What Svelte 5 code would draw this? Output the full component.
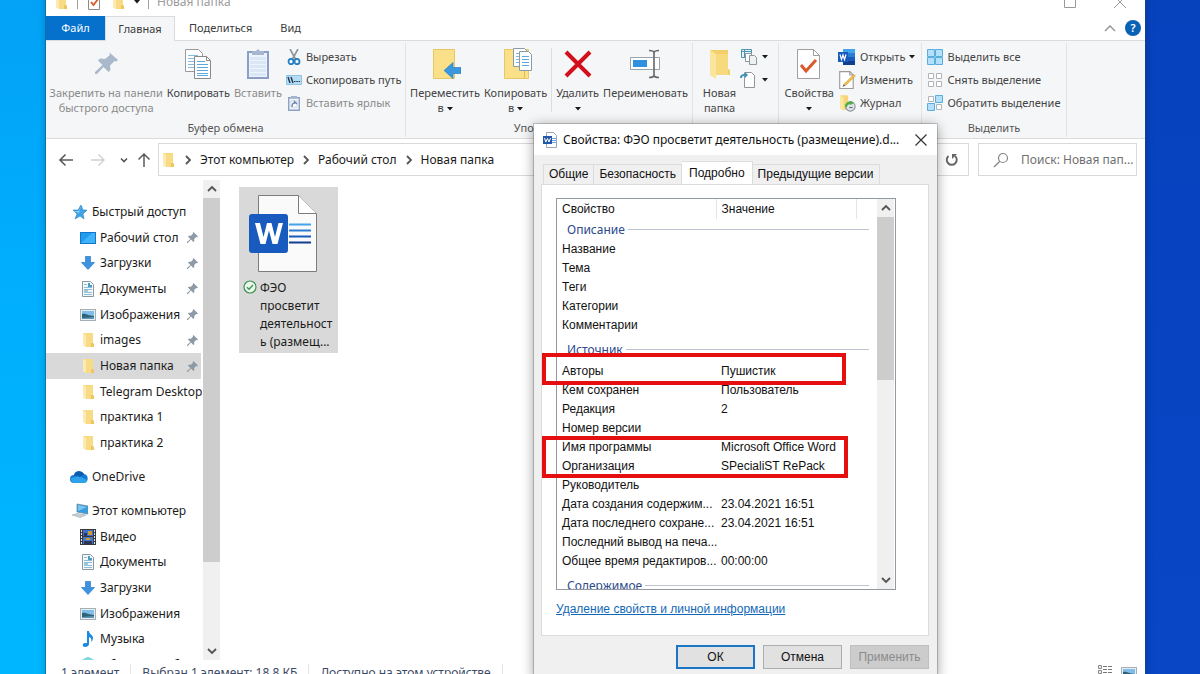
<script lang="ts">
  type NavItem = { icon: string; label: string; pinned?: boolean; root?: boolean };

  const quickAccess: NavItem[] = [
    { icon: 'star', label: 'Быстрый доступ', root: true },
    { icon: 'desktop', label: 'Рабочий стол', pinned: true },
    { icon: 'download', label: 'Загрузки', pinned: true },
    { icon: 'document', label: 'Документы', pinned: true },
    { icon: 'picture', label: 'Изображения', pinned: true },
    { icon: 'folder', label: 'images', pinned: true },
    { icon: 'folder', label: 'Новая папка', pinned: true },
    { icon: 'folder', label: 'Telegram Desktop' },
    { icon: 'folder', label: 'практика 1' },
    { icon: 'folder', label: 'практика 2' },
  ];

  const oneDrive: NavItem[] = [{ icon: 'cloud', label: 'OneDrive', root: true }];

  const computer: NavItem[] = [
    { icon: 'computer', label: 'Этот компьютер', root: true },
    { icon: 'video', label: 'Видео' },
    { icon: 'document', label: 'Документы' },
    { icon: 'download', label: 'Загрузки' },
    { icon: 'picture', label: 'Изображения' },
    { icon: 'music', label: 'Музыка' },
    { icon: 'objects', label: 'Объемные объекты' },
  ];

  const path = ['Этот компьютер', 'Рабочий стол', 'Новая папка'];

  const groups = [
    {
      title: 'Описание',
      rows: [
        ['Название', ''],
        ['Тема', ''],
        ['Теги', ''],
        ['Категории', ''],
        ['Комментарии', ''],
      ],
    },
    {
      title: 'Источник',
      rows: [
        ['Авторы', 'Пушистик'],
        ['Кем сохранен', 'Пользователь'],
        ['Редакция', '2'],
        ['Номер версии', ''],
        ['Имя программы', 'Microsoft Office Word'],
        ['Организация', 'SPecialiST RePack'],
        ['Руководитель', ''],
        ['Дата создания содержим...', '23.04.2021 16:51'],
        ['Дата последнего сохране...', '23.04.2021 16:51'],
        ['Последний вывод на печа...', ''],
        ['Общее время редактиров...', '00:00:00'],
      ],
    },
    { title: 'Содержимое', rows: [] },
  ];

  const dialogTabs = ['Общие', 'Безопасность', 'Подробно', 'Предыдущие версии'];

  let selected = $state('Новая папка');
  let activeTab = $state('Подробно');
</script>

{#snippet icon(name: string)}
  {#if name === 'folder'}
    <svg class="i16" viewBox="0 0 16 16" aria-hidden="true">
      <path d="M3 1h10v11l1 3H6l-3-2z" fill="#f8dc85" />
      <path d="M3 1l3 2v12l-3-2z" fill="#fceab2" />
      <path d="M11 11h2l1 1v3h-3z" fill="#f0c65c" />
    </svg>
  {:else if name === 'star'}
    <svg class="i16" viewBox="0 0 16 16" aria-hidden="true">
      <path d="M9 1l2 5 4 0-4 4 1 5-4-3-5 3 2-5-4-4 5 0z" fill="#3fa3e6" stroke="#2583c6" stroke-width=".6" />
      <path d="M9 2l-2 5-5 0 5 2z" fill="#8fd0f5" />
    </svg>
  {:else if name === 'desktop'}
    <svg class="i16" viewBox="0 0 16 16" aria-hidden="true">
      <rect x=".5" y="2.5" width="15" height="11" fill="#1f9bf0" stroke="#1277c8" />
      <path d="M1 13L12 3h3v10z" fill="#3fb2f8" />
    </svg>
  {:else if name === 'download'}
    <svg class="i16" viewBox="0 0 16 16" aria-hidden="true">
      <path d="M5.500 1.500h5v6h4L8 14.500l-6.500-7h4z" fill="#3d93e0" stroke="#2a78c4" stroke-width=".7" />
    </svg>
  {:else if name === 'document'}
    <svg class="i16" viewBox="0 0 16 16" aria-hidden="true">
      <path d="M2.500.5h8l3 3v12h-11z" fill="#f3f7fa" stroke="#8d979e" />
      <path d="M4 3.500h3M4 6.500h8M4 8.500h8M4 11.500h8M4 13.500h8" stroke="#8fbdd6" />
      <path d="M8 2h2v2h2v2H8z" fill="#4b9cc4" />
      <path d="M4 9h4v3H4z" fill="#9cc6dc" />
    </svg>
  {:else if name === 'picture'}
    <svg class="i16" viewBox="0 0 16 16" aria-hidden="true">
      <rect x=".5" y="2.500" width="15" height="11" fill="#e9eef2" stroke="#a5afb6" />
      <path d="M2 4h12v5H2z" fill="#80bdea" />
      <path d="M2 7c4-1 6 2 12 2v3H2z" fill="#2f6179" />
      <path d="M2 11l12-1v2H2z" fill="#5d96b6" />
    </svg>
  {:else if name === 'cloud'}
    <svg class="i18" viewBox="0 0 18 18" aria-hidden="true">
      <path d="M4 15a4 4 0 0 1 0-8 5.500 5.500 0 0 1 10-1 4.600 4.600 0 0 1 0 9z" fill="#1479d0" />
      <path d="M4 15a4 4 0 0 1-3-5l8-2 8 4c0 2-2 3-3 3z" fill="#2ea3ea" />
      <path d="M4 7a5.500 5.500 0 0 1 10-1l-4 3z" fill="#0c5cb0" />
    </svg>
  {:else if name === 'computer'}
    <svg class="i16" viewBox="0 0 16 16" aria-hidden="true">
      <path d="M5 1l11 2v8L5 9z" fill="#369de2" stroke="#6a8797" stroke-width=".7" />
      <path d="M6 2l9 2-9 4z" fill="#78c6f4" />
      <path d="M0 12l5-1.500 9 1.500-6 2.500z" fill="#c6d0d6" stroke="#93a0a8" stroke-width=".5" />
    </svg>
  {:else if name === 'video'}
    <svg class="i16" viewBox="0 0 16 16" aria-hidden="true">
      <path d="M0 0h16v16H0z" fill="#37393d" />
      <path d="M3 1h10v6H3z" fill="#3d6fd0" />
      <path d="M3 8h10v7H3z" fill="#4676c9" />
      <path d="M8 2h4v4H8zM6 9h4v2H6z" fill="#c99a36" />
      <path d="M4 4h3v3H4zM4 12h8v3H4z" fill="#29355c" />
      <path d="M1.500 1v15M14.500 1v15" stroke="#e4e4e4" stroke-dasharray="2 1" />
    </svg>
  {:else if name === 'music'}
    <svg class="i16" viewBox="0 0 16 16" aria-hidden="true">
      <path d="M7 0h2c0 3 4 4 4 7 0 2-1 3-2 4 1-3 0-4-2-5v7c0 2-2 3-4 3-3 0-3-4 0-4h2z" fill="#1c8ae0" />
    </svg>
  {:else if name === 'objects'}
    <svg class="i16" viewBox="0 0 16 16" aria-hidden="true">
      <path d="M8 0l8 4v8l-8 4-8-4V4z" fill="#3cb4cc" />
      <path d="M8 0l8 4-8 4-8-4z" fill="#7fd8e6" />
    </svg>
  {:else if name === 'scissors'}
    <svg class="i16" viewBox="0 0 16 16" aria-hidden="true">
      <path d="M4 0l5.500 10M12 0L6.500 10" fill="none" stroke="#8a939b" stroke-width="1.600" />
      <ellipse cx="5" cy="12.500" rx="2.500" ry="2.700" fill="none" stroke="#1c7cc4" stroke-width="1.700" />
      <ellipse cx="11" cy="12.500" rx="2.500" ry="2.700" fill="none" stroke="#1c7cc4" stroke-width="1.700" />
    </svg>
  {:else if name === 'copypath'}
    <svg class="i16" viewBox="0 0 16 16" aria-hidden="true">
      <path d="M.5 3.500h15v9H.5z" fill="#b5dcf4" stroke="#8fc4e4" />
      <path d="M2 5l2 6M5 5l2 6" stroke="#203850" stroke-width="1.400" />
      <path d="M8 9.500h6" stroke="#203850" stroke-dasharray="1.500 .8" />
    </svg>
  {:else if name === 'shortcut'}
    <svg class="i16" viewBox="0 0 16 16" aria-hidden="true">
      <path d="M2.700 2.700h10.600v12.600H2.700z" fill="#eef3fa" stroke="#8da2c2" stroke-width="1.400" />
      <path d="M5 1h6v2.500H5z" fill="#a3b4ce" />
      <path d="M5 6h6v6H5z" fill="#fff" stroke="#b6c4da" stroke-width=".6" />
      <path d="M6 12c0-3 1-4 2.500-4V6.500L11 9" fill="none" stroke="#6c86b4" stroke-width="1.300" />
    </svg>
  {:else if name === 'word'}
    <svg class="i18" viewBox="0 0 18 16" aria-hidden="true">
      <path d="M5 0h12v16H5z" fill="#2b7cd3" />
      <path d="M5 0h12v4H5z" fill="#41a5ee" />
      <path d="M5 8h12v4H5z" fill="#185abd" />
      <path d="M5 12h12v4H5z" fill="#103f91" />
      <path d="M0 3h10v10H0z" fill="#185abd" />
      <path d="M2 5.500l1.500 5L5 6l1.500 4.500 1.500-5" fill="none" stroke="#fff" stroke-width="1.200" />
    </svg>
  {:else if name === 'edit'}
    <svg class="i18" viewBox="0 0 16 16" aria-hidden="true">
      <path d="M1.500.5h9l3 3v12h-12z" fill="#fff" stroke="#9b9b9b" />
      <path d="M10.500.5v3h3" fill="none" stroke="#9b9b9b" />
      <path d="M5 12l9-9 1.500 1.500L6.500 13z" fill="#f2bf4a" stroke="#b98a2c" stroke-width=".4" />
      <path d="M5 12l-1 2 2.500-1z" fill="#555" />
    </svg>
  {:else if name === 'history'}
    <svg class="i18" viewBox="0 0 16 16" aria-hidden="true">
      <path d="M2 1h6l1 1v12H4l-2-1z" fill="#f6d678" />
      <path d="M2 1l3 2v12l-3-2z" fill="#fbe7a4" />
      <circle cx="11" cy="11" r="4.200" fill="#dfe6ea" stroke="#8d979e" />
      <path d="M6 11a5 5 0 0 1 5-4v-1l3 2-3 2V9c-2 0-3 1-3 3z" fill="#4fae45" />
      <path d="M10 12h3" stroke="#60707a" />
    </svg>
  {:else if name === 'select-all'}
    <svg class="i16" viewBox="0 0 16 16" aria-hidden="true">
      <path d="M.5.5h7v7h-7zM8.500.5h7v7h-7zM.5 8.500h7v7h-7zM8.500 8.500h7v7h-7z" fill="#b4e0fb" stroke="#5aaedb" />
    </svg>
  {:else if name === 'select-none'}
    <svg class="i16" viewBox="0 0 16 16" aria-hidden="true">
      <path d="M1.500 1.500h5v5h-5zM9.500 1.500h5v5h-5zM1.500 9.500h5v5h-5zM9.500 9.500h5v5h-5z" fill="#fff" stroke="#b0b4b8" />
    </svg>
  {:else if name === 'select-invert'}
    <svg class="i16" viewBox="0 0 16 16" aria-hidden="true">
      <path d="M1.500 1.500h5v5h-5zM9.500 9.500h5v5h-5z" fill="#fff" stroke="#b0b4b8" />
      <path d="M8.500.5h7v7h-7zM.5 8.500h7v7h-7z" fill="#b4e0fb" stroke="#5aaedb" />
    </svg>
  {:else if name === 'check'}
    <svg class="i16" viewBox="0 0 16 16" aria-hidden="true">
      <path d="M2.500.5h11v15h-11z" fill="#fff" stroke="#8b8b8b" />
      <path d="M5 8l2.500 3L12 5" fill="none" stroke="#d9592b" stroke-width="1.800" />
    </svg>
  {:else if name === 'word-doc'}
    <svg class="i16" viewBox="0 0 16 16" aria-hidden="true">
      <path d="M4.500.5h7l3 3v12h-10z" fill="#fff" stroke="#9aa7b4" />
      <path d="M10 6.500h4M10 8.500h4M10 10.500h4" stroke="#6fa3dd" />
      <path d="M1 4h9v8H1z" fill="#2459a9" />
      <path d="M2.500 6l1.300 4L5.500 6.500 7 10l1.500-4" fill="none" stroke="#fff" stroke-width="1" />
    </svg>
  {/if}
{/snippet}

{#snippet caret()}
  <svg class="caret" viewBox="0 0 6 4" aria-hidden="true"><path d="M0 0h6L3 3.500z" fill="#1b1b1b" /></svg>
{/snippet}

{#snippet chevron(d: string)}
  <svg class="chev" viewBox="0 0 10 10" aria-hidden="true">
    <path {d} fill="none" stroke="#555" stroke-width="1.800" />
  </svg>
{/snippet}

{#snippet tree(items: NavItem[])}
  {#each items as item}
    <li>
      <button
        type="button"
        class="node"
        class:root={item.root}
        class:selected={item.label === selected}
        onclick={() => (selected = item.label)}
      >
        {@render icon(item.icon)}
        <span>{item.label}</span>
        {#if item.pinned}
          <svg class="pin" viewBox="0 0 12 12" aria-hidden="true">
            <path d="M7 0l5 5-1 .8-1-.3L7.800 7.700 8 10l-1 1-2.700-2.700L1 12H0v-1l3.700-3.300L1 5l1-1 2.300.2L6.500 2 6.200 1z" fill="#8d99a4" />
          </svg>
        {/if}
      </button>
    </li>
  {/each}
{/snippet}

<main class="desktop">
  <section class="explorer" aria-label="Проводник">
    <header class="titlebar">
      <div class="quick">
        {@render icon('folder')}
        <i class="bar"></i>
        {@render icon('check')}
        {@render icon('folder')}
        {@render caret()}
        <i class="bar"></i>
      </div>
      <span class="caption">Новая папка</span>
      <button type="button" aria-label="Развернуть">
        <svg class="cap" viewBox="0 0 12 12"><path d="M.5.5h11v11H.5z" fill="none" stroke="#999" /></svg>
      </button>
      <button type="button" aria-label="Закрыть">
        <svg class="cap" viewBox="0 0 12 12"><path d="M0 0l12 12M12 0L0 12" stroke="#999" /></svg>
      </button>
    </header>

    <nav class="menu">
      <button type="button" class="file">Файл</button>
      <button type="button" class="home">Главная</button>
      <button type="button">Поделиться</button>
      <button type="button">Вид</button>
      <div class="menu-end">
        <svg class="fold" viewBox="0 0 12 8" aria-hidden="true">
          <path d="M1 7l5-5 5 5" fill="none" stroke="#8f8f8f" stroke-width="1.300" />
        </svg>
        <button type="button" class="help">?</button>
      </div>
    </nav>

    <div class="ribbon">
      <div class="group">
        <div class="tools">
          <button type="button" class="big off">
            <svg class="i32" viewBox="0 0 32 32" aria-hidden="true">
              <path d="M20 5l8 7-1.500 1.500-2-.5-4.500 4.500.5 4.500-2 2-5-5L7 26H5v-2l7.500-7L8 12.500l2-2 5 .5 5-4-.8-1.500z" fill="#a9b9cb" />
            </svg>
            <span>Закрепить на панели<br />быстрого доступа</span>
          </button>
          <button type="button" class="big">
            <svg class="i32" viewBox="0 0 32 32" aria-hidden="true">
              <path d="M3.500 1.500h13l4 4v18h-17z" fill="#fff" stroke="#9a9a9a" />
              <path d="M6 7.500h10M6 10.500h10M6 13.500h8M6 16.500h8M6 19.500h8" stroke="#82bce0" />
              <path d="M12.500 8.500h12l4 4v18h-16z" fill="#fff" stroke="#8a8a8a" />
              <path d="M24.500 8.500v4h4" fill="none" stroke="#8a8a8a" />
              <path d="M15 13.500h8M15 16.500h11M15 19.500h11M15 22.500h11M15 25.500h11M15 27.500h11" stroke="#5ba8dc" />
            </svg>
            <span>Копировать</span>
          </button>
          <button type="button" class="big off">
            <svg class="i32" viewBox="0 0 32 32" aria-hidden="true">
              <path d="M6 4h20v26H6z" fill="#edf3fc" stroke="#8b9fc6" stroke-width="2" />
              <path d="M8 9h16v19H8z" fill="#dbe6f6" />
              <path d="M8 12.500h16M8 16.500h16M8 20.500h16M8 24.500h16" stroke="#eef4fc" />
              <path d="M10 3h4l2-2 2 2h4v4H10z" fill="#a7b6d0" />
            </svg>
            <span>Вставить</span>
          </button>
          <div class="small">
            <button type="button">{@render icon('scissors')}Вырезать</button>
            <button type="button">{@render icon('copypath')}Скопировать путь</button>
            <button type="button" class="off">{@render icon('shortcut')}Вставить ярлык</button>
          </div>
        </div>
        <span class="legend">Буфер обмена</span>
      </div>

      <div class="group">
        <div class="tools">
          <button type="button" class="big">
            <svg class="i32" viewBox="0 0 32 32" aria-hidden="true">
              <path d="M4.500 1.500h21v29h-21z" fill="#fbe08a" stroke="#e8c765" />
              <path d="M32 19.500v6h-8v5L15 22.500l9-8v5z" fill="#3b97de" stroke="#2c7fc4" stroke-width=".7" />
            </svg>
            <span>Переместить<br />в {@render caret()}</span>
          </button>
          <button type="button" class="big">
            <svg class="i32" viewBox="0 0 32 32" aria-hidden="true">
              <path d="M4.500 1.500h24v29h-24z" fill="#fbe08a" stroke="#e8c765" />
              <path d="M24.500 15v15" stroke="#e8b950" />
              <path d="M13.500.5h11l3 3v15h-14z" fill="#fff" stroke="#8a9aa8" />
              <path d="M16 5.500h8M16 8.500h8M16 11.500h8M16 14.500h8" stroke="#7fb6dc" />
              <path d="M19.500 3.500h9l3 3v16h-12z" fill="#fff" stroke="#8a9aa8" />
              <path d="M22 8.500h7M22 11.500h7M22 14.500h7M22 17.500h7" stroke="#5ba8dc" />
            </svg>
            <span>Копировать<br />в {@render caret()}</span>
          </button>
          <i class="divider"></i>
          <button type="button" class="big">
            <svg class="i32" viewBox="0 0 32 32" aria-hidden="true">
              <path d="M4 4l24 24M28 4L4 28" stroke="#d30f1c" stroke-width="4" />
            </svg>
            <span>Удалить<br />{@render caret()}</span>
          </button>
          <button type="button" class="big">
            <svg class="i32" viewBox="0 0 32 32" aria-hidden="true">
              <path d="M1.500 9.500h29v12h-29z" fill="#fff" stroke="#9aa2aa" />
              <path d="M4 12h14v7H4z" fill="#2f90e0" />
              <path d="M20 2.500c3 0 4.500 0 5 2 .5-2 2-2 5-2M25 4v24M20 29.500c3 0 4.500 0 5-2 .5 2 2 2 5 2" fill="none" stroke="#666" stroke-width="1.600" />
            </svg>
            <span>Переименовать</span>
          </button>
        </div>
        <span class="legend">Упорядочить</span>
      </div>

      <div class="group">
        <div class="tools">
          <button type="button" class="big">
            <svg class="i32" viewBox="0 0 32 32" aria-hidden="true">
              <path d="M6 2h18v19l2 1v5H12z" fill="#f3cf69" />
              <path d="M6 2l6 4v25l-6-4z" fill="#fbe49b" />
              <path d="M12 6h12v21H12z" fill="#f7d97e" />
            </svg>
            <span>Новая<br />папка</span>
          </button>
          <div class="small">
            <button type="button" aria-label="Создать элемент">
              <svg class="i18" viewBox="0 0 18 18" aria-hidden="true">
                <path d="M1.500 1.500h10v8h-10z" fill="#e5f2f6" stroke="#4f94ae" />
                <path d="M1 3.500h11M4.500 1v9" stroke="#4f94ae" />
                <path d="M5.500 5.500h6v8h-6z" fill="#fff" stroke="#8d979e" />
                <path d="M9.500 7.500h5l2 2v7h-7z" fill="#eef0f2" stroke="#8d979e" />
              </svg>
              {@render caret()}
            </button>
            <button type="button" aria-label="Простой доступ">
              <svg class="i18" viewBox="0 0 18 18" aria-hidden="true">
                <path d="M4.500 1.500h7l3 3v12h-10z" fill="#fff" stroke="#8d979e" />
                <path d="M0 7c0-3 2-4 5-4V1l3 3-3 3V5C3 5 2 5 2 7z" fill="#3f92b4" />
              </svg>
              {@render caret()}
            </button>
          </div>
        </div>
      </div>

      <div class="group">
        <div class="tools">
          <button type="button" class="big">
            <svg class="i32" viewBox="0 0 32 32" aria-hidden="true">
              <path d="M4.500 1.500h16l6 6v23h-22z" fill="#fff" stroke="#a0a0a0" />
              <path d="M20.500 1.500v6h6" fill="none" stroke="#a0a0a0" />
              <path d="M8 17l5 6L23 12" fill="none" stroke="#d9592b" stroke-width="3" />
            </svg>
            <span>Свойства<br />{@render caret()}</span>
          </button>
          <div class="small">
            <button type="button">{@render icon('word')}Открыть {@render caret()}</button>
            <button type="button">{@render icon('edit')}Изменить</button>
            <button type="button">{@render icon('history')}Журнал</button>
          </div>
        </div>
      </div>

      <div class="group">
        <div class="tools">
          <div class="small">
            <button type="button">{@render icon('select-all')}Выделить все</button>
            <button type="button">{@render icon('select-none')}Снять выделение</button>
            <button type="button">{@render icon('select-invert')}Обратить выделение</button>
          </div>
        </div>
        <span class="legend">Выделить</span>
      </div>
    </div>

    <div class="address">
      <button type="button" aria-label="Назад">
        <svg class="i16" viewBox="0 0 16 16"><path d="M15 8H2M7.500 2.500L2 8l5.500 5.500" fill="none" stroke="#5a5a5a" stroke-width="1.600" /></svg>
      </button>
      <button type="button" aria-label="Вперед">
        <svg class="i16" viewBox="0 0 16 16"><path d="M1 8h13M8.500 2.500L14 8l-5.500 5.500" fill="none" stroke="#cfcfcf" stroke-width="1.400" /></svg>
      </button>
      <button type="button" class="narrow" aria-label="Последние расположения">
        <svg class="chev" viewBox="0 0 10 10"><path d="M2 3.500l3 3 3-3" fill="none" stroke="#555" stroke-width="1.600" /></svg>
      </button>
      <button type="button" class="narrow" aria-label="Вверх">
        <svg class="i16" viewBox="0 0 16 16"><path d="M8 15V2M2.500 7.500L8 2l5.500 5.500" fill="none" stroke="#5a5a5a" stroke-width="1.500" /></svg>
      </button>
      <div class="path">
        {@render icon('folder')}
        {#each path as part}
          {@render chevron('M3 1l4 4-4 4')}
          <button type="button">{part}</button>
        {/each}
        <button type="button" class="refresh" aria-label="Обновить">
          <svg class="i16" viewBox="0 0 16 16">
            <path d="M4.500 4A5 5 0 1 0 11 4" fill="none" stroke="#666" stroke-width="1.900" />
            <path d="M13 2H8v5z" fill="#666" />
          </svg>
        </button>
      </div>
      <label class="search">
        <svg class="i16" viewBox="0 0 16 16" aria-hidden="true">
          <circle cx="10" cy="6" r="4.500" fill="none" stroke="#858585" stroke-width="1.200" />
          <path d="M6.800 9.200L1 15" stroke="#858585" stroke-width="1.300" />
        </svg>
        <input type="text" placeholder="Поиск: Новая пап..." aria-label="Поиск" />
      </label>
    </div>

    <div class="body">
      <nav class="tree">
        <ul class="quick-list">{@render tree(quickAccess)}</ul>
        <ul class="drive-list">{@render tree(oneDrive)}</ul>
        <ul class="computer-list">{@render tree(computer)}</ul>
      </nav>
      <div class="scroll">
        <button type="button" aria-label="Прокрутить вверх">{@render chevron('M1 7l4-4 4 4')}</button>
        <div class="track"><i class="thumb"></i></div>
        <button type="button" aria-label="Прокрутить вниз">{@render chevron('M1 3l4 4 4-4')}</button>
      </div>
      <div class="files">
        <button type="button" class="tile">
          <svg class="doc" viewBox="0 0 70 80" aria-hidden="true">
            <path d="M10.500 1.500h40l18 18v58h-58z" fill="#fafafa" stroke="#7c7c7c" />
            <path d="M50.500 1.500v18h18" fill="#fff" stroke="#7c7c7c" />
            <path d="M41 30.500h22" stroke="#41a5ee" stroke-width="2" />
            <path d="M41 36.500h22" stroke="#2b7cd3" stroke-width="2" />
            <path d="M41 42.500h22" stroke="#185abd" stroke-width="2" />
            <path d="M41 48.500h22" stroke="#103f91" stroke-width="2" />
            <rect x="1" y="20" width="39" height="39" rx="3" fill="#185abd" />
            <path d="M7 29h5l3.500 14L19 29h4.500L27 43l3.500-14H35l-5.500 21h-5L21 36.500 17.500 50h-5z" fill="#fff" />
          </svg>
          <span class="name">
            <svg class="i14" viewBox="0 0 14 14" aria-hidden="true">
              <circle cx="7" cy="7" r="6" fill="#eaf7ec" stroke="#3f9151" stroke-width="1.200" />
              <path d="M4 7.200l2 2L10 5" fill="none" stroke="#3f9151" stroke-width="1.300" />
            </svg>
            <span>ФЭО<br />просветит<br />деятельност<br />ь (размещ...</span>
          </span>
        </button>
      </div>
    </div>

    <footer class="status">
      <span>1 элемент</span>
      <span>Выбран 1 элемент: 18,8 КБ</span>
      <span>Доступно на этом устройстве</span>
      <div class="views">
        <svg class="i16" viewBox="0 0 16 16" aria-hidden="true">
          <path d="M1.500.5h3v3h-3zM1.500 5.500h3v3h-3zM1.500 10.500h3v3h-3z" fill="#eee" stroke="#8a8a8a" />
          <path d="M6 1.500h4M11 1.500h4M6 4.500h4M11 4.500h4M6 7.500h4M11 7.500h4M6 10.500h4M11 10.500h4" stroke="#777" />
        </svg>
        {@render icon('picture')}
      </div>
    </footer>
  </section>

  <div class="dialog" role="dialog" aria-labelledby="dialog-title">
    <header>
      {@render icon('word-doc')}
      <h1 id="dialog-title">Свойства: ФЭО просветит деятельность (размещение).d...</h1>
      <button type="button" aria-label="Закрыть">
        <svg class="cap" viewBox="0 0 12 12"><path d="M.5.5l11 11M11.500.5l-11 11" stroke="#333" stroke-width="1.200" /></svg>
      </button>
    </header>

    <div class="tabs" role="tablist">
      {#each dialogTabs as tab}
        <button type="button" role="tab" aria-selected={tab === activeTab} onclick={() => (activeTab = tab)}>{tab}</button>
      {/each}
    </div>

    <div class="panel">
      <div class="list">
        <div class="view">
          <table>
            <thead>
              <tr><th>Свойство</th><th>Значение</th></tr>
            </thead>
            {#each groups as group}
              <tbody>
                <tr class="section"><th colspan="2"><div>{group.title}</div></th></tr>
                {#each group.rows as [key, value]}
                  <tr><td>{key}</td><td>{value}</td></tr>
                {/each}
              </tbody>
            {/each}
          </table>
        </div>
        <div class="scroll">
          <button type="button" aria-label="Прокрутить вверх">{@render chevron('M1 7l4-4 4 4')}</button>
          <div class="track"><i class="thumb"></i></div>
          <button type="button" aria-label="Прокрутить вниз">{@render chevron('M1 3l4 4 4-4')}</button>
        </div>
      </div>
      <a href="#remove">Удаление свойств и личной информации</a>
    </div>

    <div class="actions">
      <button type="button" class="primary">ОК</button>
      <button type="button">Отмена</button>
      <button type="button" disabled>Применить</button>
    </div>

    <i class="mark author"></i>
    <i class="mark program"></i>
  </div>
</main>

<style>
  :global(body) {
    margin: 0;
  }
  .desktop {
    position: relative;
    height: 100vh;
    overflow: hidden;
    background:
      linear-gradient(#03a2f7, #00b0fe 50%, #00b7ff) left / 50% 100% no-repeat,
      linear-gradient(#0742bd, #0846c6);
    color: #1b1b1b;
    font: 12px/18px 'Noto Sans', 'Open Sans', sans-serif;
  }
  .desktop * {
    box-sizing: border-box;
  }
  button {
    display: flex;
    align-items: center;
    justify-content: center;
    padding: 0;
    border: 0;
    background: none;
    color: inherit;
    font: inherit;
    white-space: nowrap;
  }
  svg {
    display: block;
    flex: none;
  }
  .i14 {
    width: 14px;
    height: 14px;
  }
  .i16 {
    width: 16px;
    height: 16px;
  }
  .i18 {
    width: 18px;
    height: 18px;
  }
  .i32 {
    width: 32px;
    height: 32px;
  }
  .cap {
    width: 12px;
    height: 12px;
  }
  .chev {
    width: 10px;
    height: 10px;
  }
  .caret {
    display: inline-block;
    width: 6px;
    height: 4px;
    vertical-align: middle;
  }

  /* explorer window */
  .explorer {
    position: absolute;
    inset: -12px 55px -12px 46px;
    display: flex;
    flex-direction: column;
    background: #fff;
    box-shadow:
      0 0 0 1px rgba(20, 80, 120, 0.5),
      0 0 8px rgba(0, 0, 0, 0.25);
  }
  .titlebar {
    display: flex;
    height: 28px;
    align-items: center;
    padding-left: 7px;
    color: #9c9c9c;
  }
  .quick {
    display: flex;
    align-items: center;
    gap: 8px;
  }
  .bar {
    width: 1px;
    height: 14px;
    background: #a0a0a0;
  }
  .caption {
    flex: 1;
    padding-left: 8px;
  }
  .titlebar button {
    width: 50px;
    height: 24px;
  }

  .menu {
    display: flex;
    height: 25px;
    border-bottom: 1px solid #dadbdc;
    color: #3b3b3b;
    font-size: 11px;
  }
  .menu > button {
    padding: 0 14px;
  }
  .menu .file {
    width: 59px;
    background: #0571cd;
    color: #fff;
  }
  .menu .home {
    width: 70px;
    height: 25px;
    padding: 0;
    border: 1px solid #dadbdc;
    border-bottom: 0;
    background: #f5f6f7;
  }
  .menu-end {
    display: flex;
    align-items: center;
    gap: 9px;
    margin-left: auto;
    padding-right: 4px;
  }
  .fold {
    width: 12px;
    height: 8px;
  }
  .help {
    width: 16px;
    height: 16px;
    border-radius: 50%;
    background: #0a62b5;
    color: #fff;
    font-weight: 600;
  }

  .ribbon {
    display: grid;
    grid-template-columns: 360px 287px 86px 143px 145px;
    height: 98px;
    padding: 2px 0 1px;
    border-bottom: 1px solid #dadbdc;
    background: #f5f6f7;
    color: #444;
    font-size: 11px;
    line-height: 15px;
  }
  .group {
    display: flex;
    flex-direction: column;
    align-items: center;
    justify-content: space-between;
    border-right: 1px solid #e2e3e4;
  }
  .tools {
    display: flex;
    gap: 4px;
    padding-top: 5px;
  }
  .legend {
    line-height: 18px;
    color: #555;
  }
  .big {
    flex-direction: column;
    justify-content: flex-start;
    gap: 5px;
  }
  .off {
    color: #8a8a8a;
  }
  .divider {
    width: 1px;
    height: 64px;
    background: #dcdddf;
  }
  .small {
    display: flex;
    flex-direction: column;
    margin-top: -3px;
  }
  .small button {
    height: 23px;
    justify-content: flex-start;
    gap: 4px;
  }

  .address {
    display: flex;
    height: 41px;
    align-items: center;
    padding: 0 8px 0 4px;
  }
  .address > button {
    width: 32px;
    height: 32px;
  }
  .address > .narrow {
    width: 20px;
  }
  .path {
    display: flex;
    flex: 1;
    height: 33px;
    align-items: center;
    gap: 7px;
    margin-left: 4px;
    padding-left: 1px;
    border: 1px solid #d9d9d9;
  }
  .refresh {
    width: 32px;
    height: 32px;
    margin-left: auto;
  }
  .search {
    display: flex;
    width: 159px;
    height: 33px;
    align-items: center;
    gap: 12px;
    margin-left: 9px;
    padding: 0 2px 0 14px;
    border: 1px solid #d9d9d9;
  }
  .search input {
    min-width: 0;
    flex: 1;
    padding: 0;
    border: 0;
    outline: 0;
    background: none;
    font: inherit;
  }
  .search input::placeholder {
    color: #6f6f6f;
    opacity: 1;
  }

  .body {
    display: flex;
    min-height: 0;
    flex: 1;
  }
  .tree {
    display: flex;
    width: 157px;
    flex-direction: column;
    gap: 8px;
    overflow: hidden;
    padding-top: 19px;
  }
  ul {
    display: grid;
    flex: none;
    grid-auto-rows: 1fr;
    margin: 0;
    padding: 0;
    list-style: none;
  }
  .quick-list {
    height: 257px;
  }
  .drive-list {
    height: 26px;
  }
  .computer-list {
    height: 180px;
  }
  .node {
    width: 155px;
    height: 100%;
    justify-content: flex-start;
    gap: 4px;
    padding-left: 34px;
  }
  .root {
    padding-left: 26px;
  }
  .root .i18 {
    margin-left: -2px;
  }
  .selected {
    background: #d9d9d9;
  }
  .pin {
    width: 11px;
    height: 11px;
    margin-right: 3px;
    margin-left: auto;
  }

  .scroll {
    display: flex;
    width: 17px;
    flex: none;
    flex-direction: column;
    background: #f0f0f0;
  }
  .scroll button {
    height: 18px;
  }
  .track {
    flex: 1;
  }
  .thumb {
    display: block;
    height: 82%;
    background: #cdcdcd;
  }
  .list .thumb {
    height: 46%;
  }

  .files {
    flex: 1;
    padding: 7px 19px;
  }
  .tile {
    width: 99px;
    height: 166px;
    flex-direction: column;
    align-items: flex-start;
    justify-content: flex-start;
    background: #d9d9d9;
    text-align: left;
  }
  .doc {
    width: 70px;
    height: 80px;
    margin: 7px 0 5px 9px;
  }
  .name {
    display: flex;
    gap: 3px;
    padding-left: 4px;
  }
  .name svg {
    margin-top: 1px;
  }

  .status {
    display: flex;
    height: 26px;
    align-items: center;
    padding-left: 4px;
    color: #3d4a66;
  }
  .status span {
    padding: 0 11px;
    border-right: 1px solid #e4e4e4;
  }
  .views {
    display: flex;
    gap: 8px;
    margin-left: auto;
    padding-right: 8px;
  }

  /* properties dialog */
  .dialog {
    position: absolute;
    top: 124px;
    left: 534px;
    width: 403px;
    padding-bottom: 10px;
    background: #f0f0f0;
    box-shadow:
      0 0 0 1px rgba(0, 0, 0, 0.18),
      0 2px 12px rgba(0, 0, 0, 0.4);
    color: #111;
    font: 12px/19px 'Liberation Sans', Arial, sans-serif;
  }
  .dialog header {
    display: flex;
    height: 31px;
    align-items: center;
    gap: 5px;
    padding-left: 8px;
    background: #fff;
  }
  h1 {
    flex: 1;
    margin: 0;
    font: 12px/18px 'Noto Sans', 'Open Sans', sans-serif;
    white-space: nowrap;
  }
  .dialog header button {
    width: 36px;
    height: 30px;
  }
  .tabs {
    display: flex;
    height: 29px;
    align-items: flex-end;
    padding: 0 9px;
  }
  .tabs button {
    height: 20px;
    padding: 0 5px;
    border: 1px solid #dcdcdc;
    border-bottom: 0;
  }
  .tabs button + button {
    border-left: 0;
  }
  .tabs button[aria-selected='true'] {
    height: 23px;
    padding: 0 7px;
    background: #fff;
  }
  .panel {
    height: 452px;
    margin: 0 8px 0 7px;
    padding: 13px 32px 0 14px;
    border: 1px solid #dcdcdc;
    background: #fff;
  }
  .list {
    display: flex;
    height: 392px;
    margin-bottom: 10px;
    padding-right: 1px;
    border: 1px solid #9299a3;
  }
  .view {
    flex: 1;
    overflow: hidden;
  }
  table {
    width: 300px;
    border-collapse: collapse;
    table-layout: fixed;
  }
  th,
  td {
    height: 19px;
    padding: 0 0 0 5px;
    font-weight: 400;
    line-height: 19px;
    text-align: left;
    white-space: nowrap;
  }
  thead th {
    height: 20px;
    border-right: 1px solid #e5e5e5;
  }
  thead th:first-child {
    width: 159px;
  }
  .section div {
    display: flex;
    align-items: center;
    gap: 3px;
    margin: 5px 0 3px 5px;
    margin-right: -12px;
    color: #2b4a8c;
    font: 12px/19px 'Noto Sans', 'Open Sans', sans-serif;
  }
  thead + tbody .section div {
    margin-top: 1px;
    margin-bottom: 1px;
  }
  .section div::after {
    height: 1px;
    flex: 1;
    background: #bcc4d4;
    content: '';
  }
  a {
    color: #1268b8;
  }
  .actions {
    display: flex;
    justify-content: flex-end;
    gap: 8px;
    padding: 9px 8px 0;
  }
  .actions button {
    width: 79px;
    height: 24px;
    border: 1px solid #adadad;
    background: #e1e1e1;
  }
  .actions .primary {
    border: 2px solid #1a76c4;
  }
  .actions button:disabled {
    border-color: #bfbfbf;
    background: #ccc;
    color: #8b8b8b;
  }

  /* highlight frames over the table */
  .mark {
    position: absolute;
    left: 8px;
    border: 4px solid #e60f0f;
    pointer-events: none;
  }
  .author {
    top: 229px;
    width: 304px;
    height: 32px;
  }
  .program {
    top: 312px;
    width: 306px;
    height: 42px;
  }
</style>
